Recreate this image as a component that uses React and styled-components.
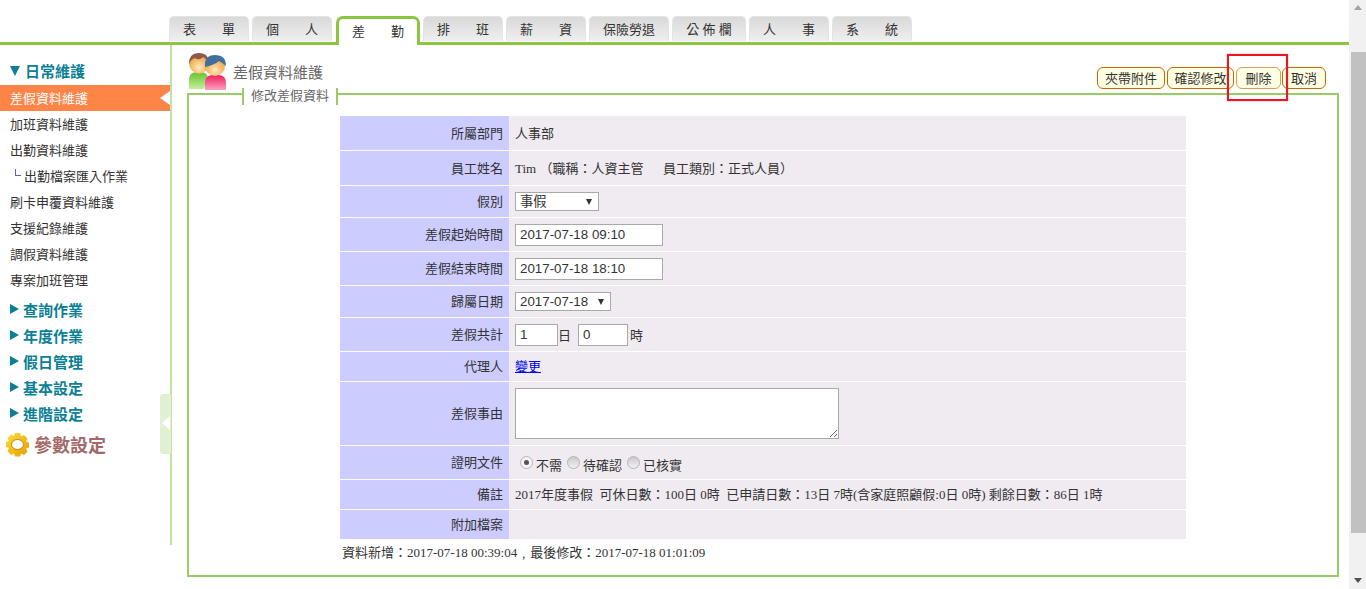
import React from "react";
import styled, { createGlobalStyle } from "styled-components";

const cjk = `"Liberation Serif", "Noto Sans CJK TC", serif`;
const green = "#99cc66";

const GlobalStyle = createGlobalStyle`
  html, body {
    margin: 0;
    padding: 0;
    background: #fff;
    overflow: hidden;
  }
  * {
    box-sizing: border-box;
  }
`;

const Shell = styled.div`
  position: relative;
  display: flex;
  width: 1366px;
  height: 589px;
  overflow: hidden;
  font-family: ${cjk};
  font-size: 13px;
  color: #333;
`;

const Page = styled.div`
  width: 1349px;
  display: flex;
  flex-direction: column;
`;

const TabBar = styled.div`
  display: flex;
  align-items: flex-start;
  height: 45px;
  padding: 16px 0 0 169px;
  border-bottom: 3px solid #8cc63f;
`;

const Tab = styled.div`
  width: ${(p) => p.$w || 80}px;
  height: 25px;
  margin-right: ${(p) => (p.$beforeActive ? 4 : 3)}px;
  padding-bottom: 2px;
  display: flex;
  align-items: center;
  justify-content: center;
  white-space: pre;
  font-size: 13px;
  color: #333;
  background: linear-gradient(#d9d9d9, #efefef);
  border: 1px solid #e4e4e4;
  border-bottom: 0;
  border-radius: 5px 5px 0 0;
`;

const ActiveTab = styled(Tab)`
  width: 84px;
  height: 29px;
  padding: 0 0 3px;
  background: #fff;
  border: 3px solid #8cc63f;
  border-bottom: 0;
  border-radius: 7px 7px 0 0;
`;

const Body = styled.div`
  display: flex;
  flex: 1;
  min-height: 0;
`;

const Sidebar = styled.nav`
  position: relative;
  flex: none;
  width: 172px;
  height: 500px;
  padding-top: 13px;
  border-right: 2px solid #c5e0a3;
`;

const OpenHead = styled.div`
  display: flex;
  align-items: center;
  height: 27px;
  padding: 0 0 2px 10px;
  font-size: 15px;
  font-weight: 700;
  color: #0b7f95;
`;

const DownMark = styled.i`
  width: 0;
  height: 0;
  margin-right: 5px;
  border-left: 5px solid transparent;
  border-right: 5px solid transparent;
  border-top: 10px solid #0b7f95;
`;

const NavItem = styled.div`
  position: relative;
  display: flex;
  align-items: center;
  height: 26px;
  padding: 0 0 2px ${(p) => (p.$sub ? 15 : 10)}px;
  font-size: 13px;
  color: ${(p) => (p.$active ? "#fff" : "#333")};
  background: ${(p) => (p.$active ? "#ff8448" : "transparent")};

  ${(p) =>
    p.$active &&
    `&::after {
      content: "";
      position: absolute;
      right: 0;
      top: 6px;
      border-top: 7px solid transparent;
      border-bottom: 7px solid transparent;
      border-right: 10px solid #fff;
    }`}
`;

const SubMark = styled.i`
  width: 6px;
  height: 7px;
  margin: -6px 3px 0 0;
  border-left: 1px solid #5566aa;
  border-bottom: 1px solid #5566aa;
`;

const Groups = styled.div`
  margin-top: 4px;
`;

const GroupHead = styled.div`
  display: flex;
  align-items: center;
  height: 26px;
  padding: 0 0 2px 10px;
  font-size: 15px;
  font-weight: 700;
  color: #0b7f95;
`;

const RightMark = styled.i`
  width: 0;
  height: 0;
  margin-right: 4px;
  border-top: 5px solid transparent;
  border-bottom: 5px solid transparent;
  border-left: 9px solid #0b7f95;
`;

const ParamRow = styled.div`
  display: flex;
  align-items: center;
  gap: 4px;
  height: 34px;
  margin-top: 1px;
  padding: 0 0 2px 5px;
  font-size: 18px;
  font-weight: 700;
  color: #a46a6a;
`;

const Collapse = styled.div`
  position: absolute;
  right: -1px;
  top: 349px;
  width: 11px;
  height: 60px;
  background: #e2f0d2;
  border-radius: 3px 0 0 3px;

  &::after {
    content: "";
    position: absolute;
    left: 2px;
    top: 22px;
    border-top: 7px solid transparent;
    border-bottom: 7px solid transparent;
    border-right: 8px solid #fff;
  }
`;

const Content = styled.main`
  flex: 1;
  min-width: 0;
  padding: 0 10px 0 15px;
`;

const HeadRow = styled.div`
  display: flex;
  justify-content: space-between;
  align-items: flex-end;
  height: 44px;
`;

const TitleGroup = styled.div`
  display: flex;
  align-items: center;
  gap: 5px;
  height: 44px;
  padding: 8px 0 0 1px;
  font-size: 15px;
  color: #666;
`;

const Actions = styled.div`
  display: flex;
  padding-right: 13px;
`;

const ActionButton = styled.button`
  width: ${(p) => p.$w}px;
  height: 22px;
  margin-left: ${(p) => p.$gap || 0}px;
  padding: 0 0 2px;
  font-family: ${cjk};
  font-size: 13px;
  color: #333;
  white-space: nowrap;
  background: #ffffe3;
  border: 1px solid ${(p) => (p.$soft ? "#e09b55" : "#cc6600")};
  border-radius: 6px;
`;

const Panel = styled.fieldset`
  height: 492px;
  margin: -4px 0 0;
  padding: 14px 0 0;
  min-width: 0;
  border: 2px solid ${green};
`;

const PanelLegend = styled.legend`
  position: relative;
  top: 3px;
  height: 17px;
  margin: 3px 0 0 53px;
  padding: 0 7px;
  line-height: 15px;
  font-size: 13px;
  color: #666;
  border-left: 2px solid ${green};
  border-right: 2px solid ${green};
`;

const FormGrid = styled.div`
  display: grid;
  grid-template-columns: 169px 677px;
  row-gap: 1px;
  width: 846px;
  margin-left: 151px;
`;

const Label = styled.div`
  display: flex;
  align-items: center;
  justify-content: flex-end;
  height: ${(p) => p.$h}px;
  padding: 0 6px 2px 0;
  background: #ccccff;
`;

const Value = styled.div`
  display: flex;
  align-items: center;
  height: ${(p) => p.$h}px;
  padding: 0 0 ${(p) => (p.$text ? 2 : 0)}px 6px;
  font-size: 13px;
  white-space: pre;
  background: #efebf1;
`;

const TextInput = styled.input`
  width: ${(p) => p.$w}px;
  height: 22px;
  padding: 1px 4px;
  font-family: "Liberation Sans", sans-serif;
  font-size: 13.33px;
  color: #333;
  background: #fff;
  border: 1px solid #a9a9a9;
  outline: 0;
`;

const SelectBox = styled.div`
  position: relative;
  width: ${(p) => p.$w}px;
  height: 19px;

  &::after {
    content: "";
    position: absolute;
    right: 7px;
    top: 7px;
    border-left: 3.5px solid transparent;
    border-right: 3.5px solid transparent;
    border-top: 6px solid #333;
  }
`;

const Select = styled.select`
  appearance: none;
  display: block;
  width: 100%;
  height: 100%;
  padding: 0 0 0 4px;
  font-family: "Liberation Sans", "Noto Sans CJK TC", sans-serif;
  font-size: 13.33px;
  color: #333;
  background: #fff;
  border: 1px solid #a9a9a9;
  border-radius: 0;
`;

const Unit = styled.span`
  margin: 0 ${(p) => p.$after || 0}px 0 ${(p) => p.$before || 0}px;
`;

const Link = styled.a`
  color: #0000ee;
  text-decoration: underline;
`;

const Reason = styled.textarea`
  display: block;
  width: 324px;
  height: 51px;
  background: #fff;
  border: 1px solid #a9a9a9;
  outline: 0;
`;

const RadioRow = styled.div`
  display: flex;
  align-items: center;
  padding-top: 4px;
`;

const Radio = styled.span`
  position: relative;
  flex: none;
  width: 13px;
  height: 13px;
  margin: -5px 3px 0 ${(p) => p.$gap}px;
  border: 1px solid #b5b5b5;
  border-radius: 50%;
  background: ${(p) =>
    p.$checked ? "#f4f4f4" : "linear-gradient(#c9c9c9, #f2f2f2)"};

  ${(p) =>
    p.$checked &&
    `&::after {
      content: "";
      position: absolute;
      left: 3px;
      top: 3px;
      width: 5px;
      height: 5px;
      border-radius: 50%;
      background: #555;
    }`}
`;

const Stamp = styled.div`
  margin-left: 151px;
  padding: 6px 0 0 2px;
  font-size: 13px;
  line-height: 15px;
  white-space: pre;
`;

const Scrollbar = styled.div`
  position: relative;
  width: 17px;
  height: 100%;
  background: #f1f1f1;

  &::before {
    content: "";
    position: absolute;
    left: 5px;
    top: 5px;
    border-left: 4px solid transparent;
    border-right: 4px solid transparent;
    border-bottom: 5px solid #a3a3a3;
  }

  &::after {
    content: "";
    position: absolute;
    left: 5px;
    bottom: 6px;
    border-left: 4px solid transparent;
    border-right: 4px solid transparent;
    border-top: 5px solid #505050;
  }
`;

const ScrollThumb = styled.div`
  position: absolute;
  left: 2px;
  right: 0;
  top: 52px;
  height: 481px;
  background: #c1c1c1;
`;

const Highlight = styled.div`
  position: absolute;
  left: 1227px;
  top: 54px;
  width: 61px;
  height: 47px;
  border: 2px solid #f0141e;
  box-shadow: 0 0 1px #ff5a64;
  pointer-events: none;
`;

const PeopleIcon = () => (
  <svg width="40" height="39" viewBox="0 0 40 39">
    <defs>
      <linearGradient id="shirtG" x1="0" y1="0" x2="0" y2="1">
        <stop offset="0" stopColor="#66c22e" />
        <stop offset="1" stopColor="#c6ee9a" />
      </linearGradient>
      <linearGradient id="shirtR" x1="0" y1="0" x2="0" y2="1">
        <stop offset="0" stopColor="#ee1f62" />
        <stop offset="1" stopColor="#fba4bd" />
      </linearGradient>
      <radialGradient id="face" cx="0.5" cy="0.7" r="0.6">
        <stop offset="0" stopColor="#ffe9c4" />
        <stop offset="1" stopColor="#f0a030" />
      </radialGradient>
    </defs>
    <path d="M1 37V27q0-6 7-7h6q5 1 6 5l-4 12z" fill="url(#shirtG)" />
    <circle cx="11" cy="11.500" r="10" fill="url(#face)" />
    <path d="M1 12Q1 1 11 1t10 11q-3-6-6-7-4 4-8 1-4 1-6 6z" fill="#8a5a4e" />
    <path d="M17 38V30q0-6 7-7h7q7 1 7 7v8z" fill="url(#shirtR)" />
    <circle cx="27" cy="14" r="10" fill="url(#face)" />
    <path d="M17 15Q16 3 27 3t11 11q-3-3-7-5-5 4-14 6z" fill="#3f6f9f" />
  </svg>
);

const GearIcon = () => (
  <svg width="25" height="25" viewBox="0 0 25 25">
    <defs>
      <linearGradient id="gold" x1="0" y1="0" x2="1" y2="1">
        <stop offset="0" stopColor="#ffdf3a" />
        <stop offset="1" stopColor="#e89a00" />
      </linearGradient>
    </defs>
    <path
      fill="url(#gold)"
      d="M10 1h5l1 3.500 3-1.500 3.500 3.500-1.500 3 3 1v5l-3 1 1.500 3-3.500 3.500-3-1.500-1 3h-5l-1-3-3 1.500L2.500 19l1.500-3-3-1v-5l3-1-1.500-3L6 2.500l3 1.500z"
    />
    <ellipse cx="12.500" cy="12.500" rx="6" ry="5" fill="#fff" />
    <ellipse cx="12.500" cy="12.500" rx="6" ry="5" fill="none" stroke="#c98300" />
  </svg>
);

const tabs = [
  { label: "表\u3000\u3000單" },
  { label: "個\u3000\u3000人", beforeActive: true },
  { label: "差\u3000\u3000勤", active: true },
  { label: "排\u3000\u3000班" },
  { label: "薪\u3000\u3000資" },
  { label: "保險勞退" },
  { label: "公 佈 欄", w: 74 },
  { label: "人\u3000\u3000事" },
  { label: "系\u3000\u3000統" },
];

const navItems = [
  { label: "差假資料維護", active: true },
  { label: "加班資料維護" },
  { label: "出勤資料維護" },
  { label: "出勤檔案匯入作業", sub: true },
  { label: "刷卡申覆資料維護" },
  { label: "支援紀錄維護" },
  { label: "調假資料維護" },
  { label: "專案加班管理" },
];

const groups = ["查詢作業", "年度作業", "假日管理", "基本設定", "進階設定"];

export default function App() {
  return (
    <Shell>
      <GlobalStyle />
      <Page>
        <TabBar>
          {tabs.map((t) =>
            t.active ? (
              <ActiveTab key={t.label}>{t.label}</ActiveTab>
            ) : (
              <Tab key={t.label} $w={t.w} $beforeActive={t.beforeActive}>
                {t.label}
              </Tab>
            )
          )}
        </TabBar>
        <Body>
          <Sidebar>
            <OpenHead>
              <DownMark />
              日常維護
            </OpenHead>
            {navItems.map((n) => (
              <NavItem key={n.label} $active={n.active} $sub={n.sub}>
                {n.sub && <SubMark />}
                {n.label}
              </NavItem>
            ))}
            <Groups>
              {groups.map((g) => (
                <GroupHead key={g}>
                  <RightMark />
                  {g}
                </GroupHead>
              ))}
            </Groups>
            <ParamRow>
              <GearIcon />
              參數設定
            </ParamRow>
            <Collapse />
          </Sidebar>
          <Content>
            <HeadRow>
              <TitleGroup>
                <PeopleIcon />
                差假資料維護
              </TitleGroup>
              <Actions>
                <ActionButton $w={68}>夾帶附件</ActionButton>
                <ActionButton $w={67} $gap={2}>確認修改</ActionButton>
                <ActionButton $w={45} $gap={2} $soft>刪除</ActionButton>
                <ActionButton $w={44} $gap={1}>取消</ActionButton>
              </Actions>
            </HeadRow>
            <Panel>
              <PanelLegend>修改差假資料</PanelLegend>
              <FormGrid>
                <Label $h={34}>所屬部門</Label>
                <Value $h={34} $text>人事部</Value>
                <Label $h={34}>員工姓名</Label>
                <Value $h={34} $text>Tim （職稱：人資主管{"\u3000  "}員工類別：正式人員）</Value>
                <Label $h={31}>假別</Label>
                <Value $h={31}>
                  <SelectBox $w={84}>
                    <Select defaultValue="事假">
                      <option>事假</option>
                    </Select>
                  </SelectBox>
                </Value>
                <Label $h={33}>差假起始時間</Label>
                <Value $h={33}>
                  <TextInput $w={148} defaultValue="2017-07-18 09:10" />
                </Value>
                <Label $h={33}>差假結束時間</Label>
                <Value $h={33}>
                  <TextInput $w={148} defaultValue="2017-07-18 18:10" />
                </Value>
                <Label $h={31}>歸屬日期</Label>
                <Value $h={31}>
                  <SelectBox $w={96}>
                    <Select defaultValue="2017-07-18">
                      <option>2017-07-18</option>
                    </Select>
                  </SelectBox>
                </Value>
                <Label $h={33}>差假共計</Label>
                <Value $h={33}>
                  <TextInput $w={43} defaultValue="1" />
                  <Unit $after={7}>日</Unit>
                  <TextInput $w={50} defaultValue="0" />
                  <Unit $before={2}>時</Unit>
                </Value>
                <Label $h={29}>代理人</Label>
                <Value $h={29} $text>
                  <Link href="#">變更</Link>
                </Value>
                <Label $h={63}>差假事由</Label>
                <Value $h={63}>
                  <Reason />
                </Value>
                <Label $h={33}>證明文件</Label>
                <Value $h={33}>
                  <RadioRow>
                    <Radio $gap={5} $checked />
                    不需
                    <Radio $gap={5} />
                    待確認
                    <Radio $gap={5} />
                    已核實
                  </RadioRow>
                </Value>
                <Label $h={29}>備註</Label>
                <Value $h={29} $text>
                  2017年度事假{"  "}可休日數：100日 0時{"  "}已申請日數：13日 7時(含家庭照顧假:0日 0時) 剩餘日數：86日 1時
                </Value>
                <Label $h={29}>附加檔案</Label>
                <Value $h={29} />
              </FormGrid>
              <Stamp>資料新增：2017-07-18 00:39:04﹐最後修改：2017-07-18 01:01:09</Stamp>
            </Panel>
          </Content>
        </Body>
      </Page>
      <Scrollbar>
        <ScrollThumb />
      </Scrollbar>
      <Highlight />
    </Shell>
  );
}
